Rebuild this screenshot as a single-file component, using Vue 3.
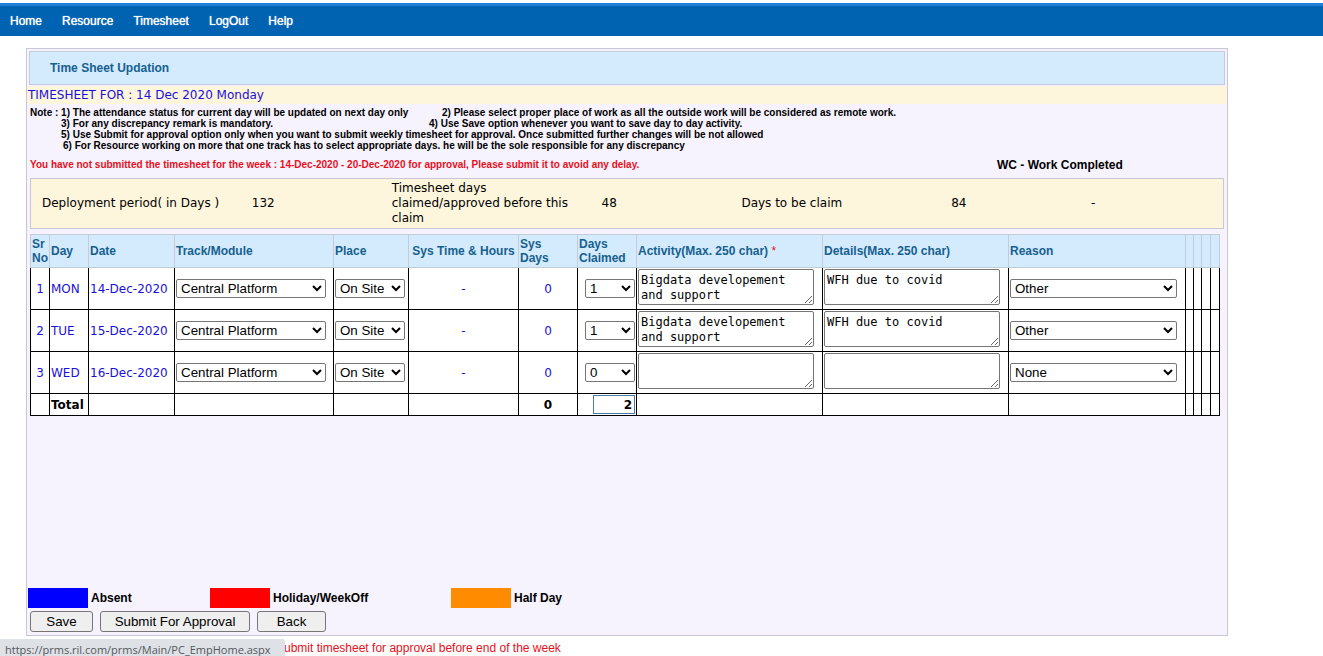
<script setup>
import { reactive, computed } from 'vue'

const menu = ['Home', 'Resource', 'Timesheet', 'LogOut', 'Help']

const summary = [
  'Deployment period( in Days )',
  '132',
  'Timesheet days claimed/approved before this claim',
  '48',
  'Days to be claim',
  '84',
  '-'
]

const rows = reactive([
  { day: 'MON', date: '14-Dec-2020', track: 'Central Platform', place: 'On Site', claimed: '1', activity: 'Bigdata developement and support', details: 'WFH due to covid', reason: 'Other' },
  { day: 'TUE', date: '15-Dec-2020', track: 'Central Platform', place: 'On Site', claimed: '1', activity: 'Bigdata developement and support', details: 'WFH due to covid', reason: 'Other' },
  { day: 'WED', date: '16-Dec-2020', track: 'Central Platform', place: 'On Site', claimed: '0', activity: '', details: '', reason: 'None' }
])

const total = computed(() => rows.reduce((sum, row) => sum + Number(row.claimed), 0))
</script>

<template>
  <div class="page">
    <nav class="menu">
      <a v-for="item in menu" :key="item" href="#">{{ item }}</a>
    </nav>

    <main class="panel">
      <h1 class="title">Time Sheet Updation</h1>
      <p class="for-date">TIMESHEET FOR : 14 Dec 2020 Monday</p>

      <div class="notes">
        <p class="first"><span class="note-a">Note : 1) The attendance status for current day will be updated on next day only</span><span>2) Please select proper place of work as all the outside work will be considered as remote work.</span></p>
        <p class="indent"><span class="note-c">3) For any discrepancy remark is mandatory.</span><span>4) Use Save option whenever you want to save day to day activity.</span></p>
        <p class="indent">5) Use Submit for approval option only when you want to submit weekly timesheet for approval. Once submitted further changes will be not allowed</p>
        <p class="indent last">6) For Resource working on more that one track has to select appropriate days. he will be the sole responsible for any discrepancy</p>
      </div>

      <div class="warning">
        <span class="warn-text">You have not submitted the timesheet for the week : 14-Dec-2020 - 20-Dec-2020 for approval, Please submit it to avoid any delay.</span>
        <strong class="wc">WC - Work Completed</strong>
      </div>

      <div class="summary">
        <span v-for="cell in summary" :key="cell">{{ cell }}</span>
      </div>

      <div class="sheet-area">
        <table class="sheet">
          <colgroup>
            <col class="w-no"><col class="w-day"><col class="w-date"><col class="w-track"><col class="w-place">
            <col class="w-time"><col class="w-days"><col class="w-days"><col class="w-text"><col class="w-text">
            <col><col class="w-s"><col class="w-s"><col class="w-m"><col class="w-m">
          </colgroup>
          <thead>
            <tr>
              <th>Sr No</th>
              <th>Day</th>
              <th>Date</th>
              <th>Track/Module</th>
              <th>Place</th>
              <th class="mid">Sys Time &amp; Hours</th>
              <th>Sys<br>Days</th>
              <th>Days Claimed</th>
              <th>Activity(Max. 250 char) <span class="req">*</span></th>
              <th>Details(Max. 250 char)</th>
              <th>Reason</th>
              <th v-for="n in 4" :key="n"></th>
            </tr>
          </thead>
          <tbody>
            <tr v-for="(row, i) in rows" :key="row.day">
              <td class="mid">{{ i + 1 }}</td>
              <td>{{ row.day }}</td>
              <td>{{ row.date }}</td>
              <td>
                <select v-model="row.track" class="s-track" :aria-label="'Track ' + row.day">
                  <option>Central Platform</option>
                </select>
              </td>
              <td>
                <select v-model="row.place" class="s-place" :aria-label="'Place ' + row.day">
                  <option>On Site</option>
                  <option>Remote</option>
                </select>
              </td>
              <td class="mid">-</td>
              <td class="mid">0</td>
              <td>
                <select v-model="row.claimed" class="s-claimed" :aria-label="'Days claimed ' + row.day">
                  <option>0</option>
                  <option>1</option>
                </select>
              </td>
              <td class="area"><textarea v-model="row.activity" :aria-label="'Activity ' + row.day"></textarea></td>
              <td class="area"><textarea v-model="row.details" :aria-label="'Details ' + row.day"></textarea></td>
              <td>
                <select v-model="row.reason" class="s-reason" :aria-label="'Reason ' + row.day">
                  <option>None</option>
                  <option>Other</option>
                </select>
              </td>
              <td v-for="n in 4" :key="n"></td>
            </tr>
            <tr class="total">
              <td></td>
              <td>Total</td>
              <td></td>
              <td></td>
              <td></td>
              <td></td>
              <td class="mid">0</td>
              <td><input type="text" :value="total" readonly aria-label="Total days claimed"></td>
              <td></td>
              <td></td>
              <td></td>
              <td v-for="n in 4" :key="n"></td>
            </tr>
          </tbody>
        </table>
      </div>

      <div class="legend">
        <span class="key absent"><i></i>Absent</span>
        <span class="key holiday"><i></i>Holiday/WeekOff</span>
        <span class="key half"><i></i>Half Day</span>
      </div>

      <div class="actions">
        <button type="button" class="b-save">Save</button>
        <button type="button" class="b-submit">Submit For Approval</button>
        <button type="button" class="b-back">Back</button>
      </div>
    </main>

    <p class="reminder">Submit timesheet for approval before end of the week</p>
    <div class="status">https://prms.ril.com/prms/Main/PC_EmpHome.aspx</div>
  </div>
</template>

<style>
body {
  background: #fff;
  overflow: hidden;
}
</style>

<style scoped>
.page {
  font-family: "Liberation Sans", Arial, sans-serif;
  font-size: 12px;
  color: #000;
  padding-top: 3px;
}
p, h1 {
  margin: 0;
}
.menu {
  display: flex;
  align-items: center;
  gap: 20px;
  height: 30px;
  padding-left: 10px;
  border-top: 3px solid #1c80d8;
  background: #0063b1;
}
.menu a {
  color: #fff;
  text-decoration: none;
  text-shadow: 0 0 1px #fff;
}
.panel {
  margin: 12px 95px 0 26px;
  border: 1px solid #c9c7d6;
  background: #f6f2fe;
  padding: 2px 0 3px;
}
.title {
  margin: 0 2px;
  padding-left: 20px;
  border: 1px solid #c5cbdc;
  background: #d3ebfd;
  color: #17608f;
  font-size: 12px;
  line-height: 32px;
}
.for-date {
  margin-top: 1px;
  padding-left: 1px;
  background: #fdf5dc;
  color: #1a10dc;
  font: 12px/18px "DejaVu Sans", Verdana, sans-serif;
}
.notes {
  padding: 3px 3px 0;
  font-size: 10px;
  font-weight: bold;
  line-height: 11px;
}
.notes p {
  display: flex;
}
.note-a {
  width: 412px;
}
.indent {
  padding-left: 31px;
}
.last {
  padding-left: 33px;
}
.note-c {
  width: 368px;
}
.warning {
  display: flex;
  align-items: center;
  height: 27px;
  padding-left: 3px;
}
.warn-text {
  width: 967px;
  color: #e8101c;
  font-size: 10px;
  font-weight: bold;
}
.wc {
  font-size: 12px;
}
.summary {
  display: grid;
  grid-template-columns: 3fr 2fr 3fr 2fr 3fr 2fr 2fr;
  align-items: center;
  margin: 0 3px;
  border: 1px solid #c9c7d6;
  background: #fdf5dc;
  padding: 2px 3px 2px 0;
  font: 12px/15px "DejaVu Sans", Verdana, sans-serif;
}
.summary span {
  padding: 0 10px 0 11px;
}
.sheet-area {
  min-height: 359px;
  margin: 0 7px 0 3px;
  padding-top: 5px;
  box-sizing: border-box;
}
.sheet {
  width: 100%;
  table-layout: fixed;
  border-collapse: collapse;
  background: #fff;
  color: #1a10dc;
  font: 12px/16px "DejaVu Sans", Verdana, sans-serif;
}
.w-no { width: 19px; }
.w-day { width: 39px; }
.w-date { width: 86px; }
.w-track { width: 159px; }
.w-place { width: 75px; }
.w-time { width: 110px; }
.w-days { width: 59px; }
.w-text { width: 186px; }
.w-s { width: 8px; }
.w-m { width: 9px; }
th {
  height: 32px;
  padding: 0 1px;
  border: 1px solid #c3ccd8;
  background: #d3ebfd;
  color: #17608f;
  text-align: left;
  font: bold 12px/14px "Liberation Sans", Arial, sans-serif;
}
.req {
  color: #e8101c;
  font-weight: normal;
}
td {
  height: 41px;
  padding: 0 1px;
  border: 1px solid #000;
}
.mid {
  text-align: center;
}
select, textarea, input {
  display: block;
  box-sizing: border-box;
  margin: 0;
  border: 1px solid #767676;
  border-radius: 2px;
  background: #fff;
  color: #000;
}
select {
  height: 19px;
  padding: 0;
  font-family: "Liberation Sans", Arial, sans-serif;
}
.s-track { width: 150px; }
.s-place { width: 70px; }
.s-claimed { width: 50px; margin-left: auto; }
.s-reason { width: 167px; }
td.area {
  height: 38px;
  padding-bottom: 3px;
}
textarea {
  width: 176px;
  height: 36px;
  padding: 3px 2px;
  overflow: hidden;
  font: 12px/15px "DejaVu Sans Mono", Consolas, monospace;
}
.total td {
  height: 21px;
  color: #000;
  font-weight: bold;
}
.total td:nth-child(2) {
  white-space: nowrap;
}
.total input {
  width: 42px;
  height: 19px;
  margin-left: auto;
  padding: 0 2px;
  border-color: #4a7ba8;
  border-radius: 0;
  text-align: right;
  font: bold 12px/15px "DejaVu Sans", Verdana, sans-serif;
}
.legend {
  display: flex;
  padding-left: 1px;
  font-weight: bold;
  line-height: 20px;
}
.key {
  display: flex;
  gap: 3px;
}
.key i {
  width: 60px;
  height: 20px;
}
.absent { width: 182px; }
.absent i { background: #0000ff; }
.holiday { width: 241px; }
.holiday i { background: #ff0000; }
.half i { background: #ff8c00; }
.actions {
  display: flex;
  gap: 7px;
  padding: 3px 3px 0;
}
button {
  height: 21px;
  padding: 0;
  border: 1px solid #767676;
  border-radius: 3px;
  background: #efefef;
  color: #000;
  font-family: "Liberation Sans", Arial, sans-serif;
}
.b-save { width: 63px; }
.b-submit { width: 150px; }
.b-back { width: 69px; }
.reminder {
  padding: 5px 0 0 276px;
  color: #e8101c;
  line-height: 14px;
}
.status {
  position: fixed;
  left: 0;
  bottom: 0;
  box-sizing: border-box;
  height: 17px;
  min-width: 285px;
  padding: 0 7px 0 5px;
  border-top-right-radius: 3px;
  background: #dee1e6;
  color: #55585c;
  font: 11px/21px "Open Sans", "Segoe UI", sans-serif;
  overflow: hidden;
}
</style>
